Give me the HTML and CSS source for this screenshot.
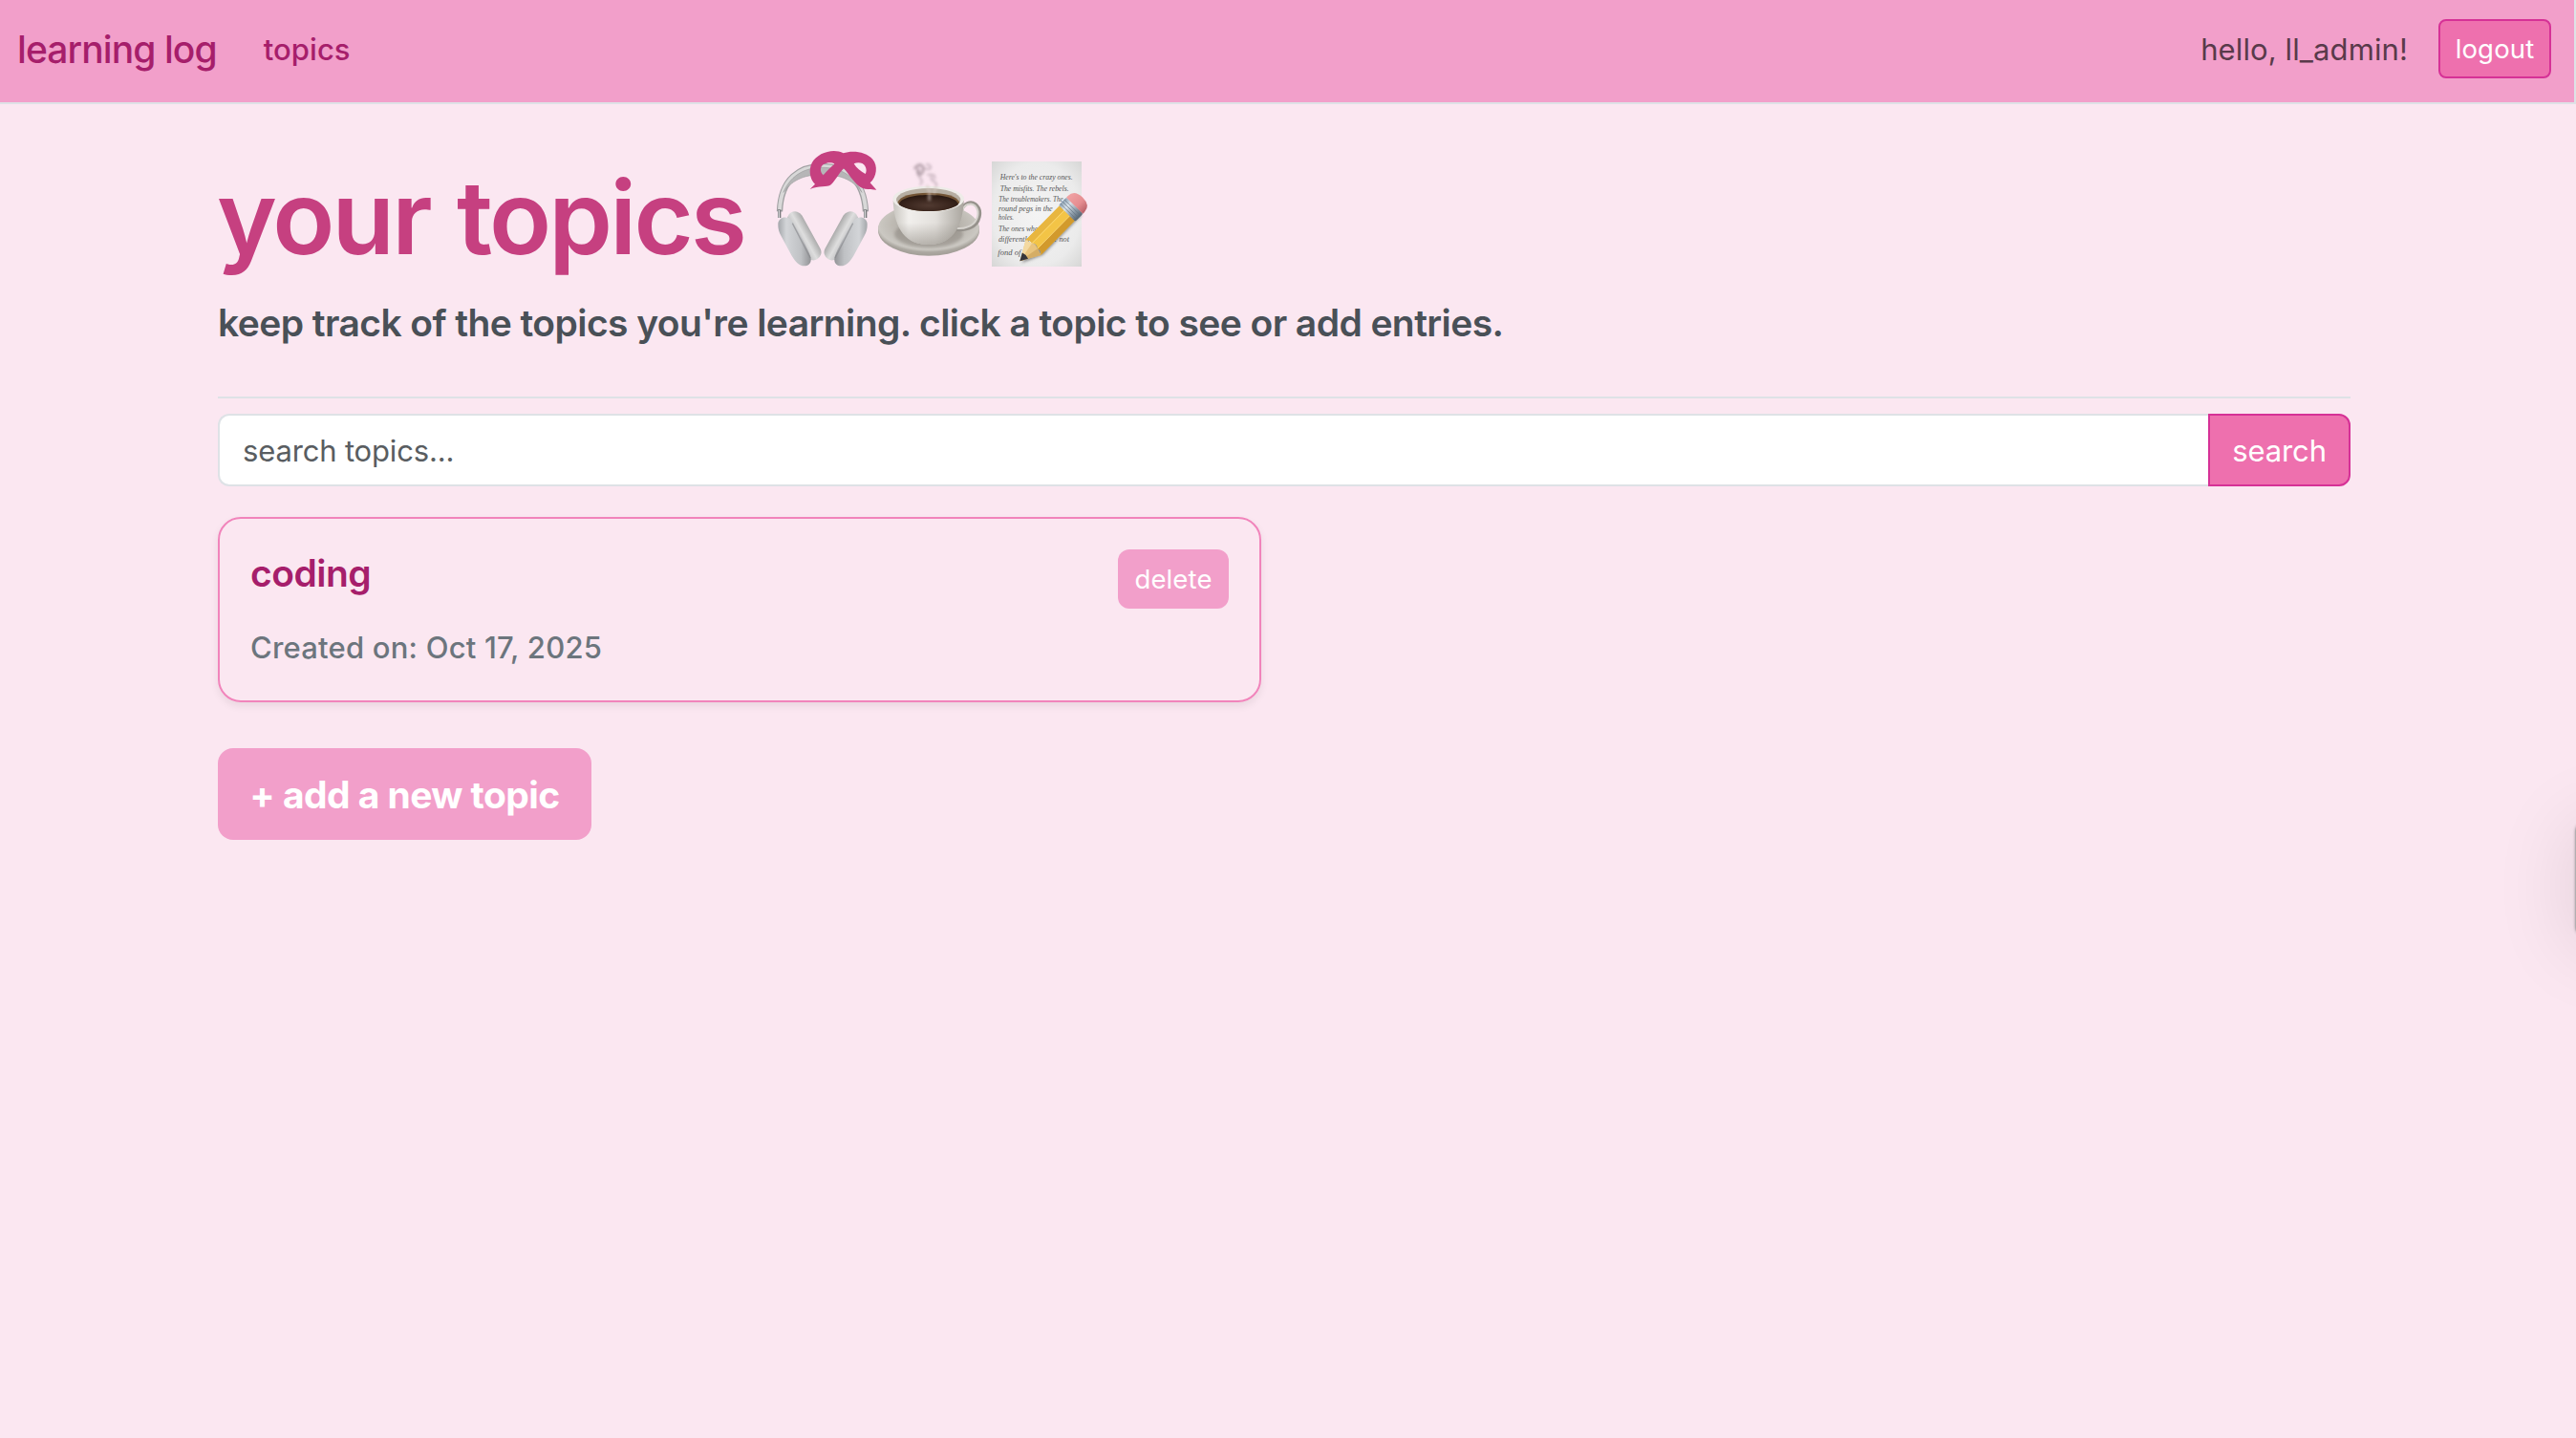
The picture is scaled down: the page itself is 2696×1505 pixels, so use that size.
FILE: index.html
```
<!DOCTYPE html>
<html lang="en">
<head>
<meta charset="utf-8">
<title>learning log</title>
<link rel="stylesheet" href="styles.css">
</head>
<body>
<nav class="navbar">
  <a class="brand">learning log</a>
  <a class="nav-link">topics</a>
  <span class="greeting">hello, ll_admin!</span>
  <button class="btn-logout">logout</button>
</nav>
<main class="container">
  <h1 class="title">
    <span class="title-text">your topics</span>
    <svg class="title-art" viewBox="0 0 1110 480" aria-hidden="true">
      <defs>
        <linearGradient id="cupL" x1="0" x2="1"><stop offset="0" stop-color="#a3a6aa"/><stop offset=".25" stop-color="#d3d5d8"/><stop offset=".7" stop-color="#bfc1c4"/><stop offset="1" stop-color="#929396"/></linearGradient>
        <linearGradient id="pad" x1="0" x2="1"><stop offset="0" stop-color="#bdbdbf"/><stop offset=".5" stop-color="#dedede"/><stop offset="1" stop-color="#acacac"/></linearGradient>
        <radialGradient id="saucer" cx=".5" cy=".42" r=".55"><stop offset="0" stop-color="#8f8a83"/><stop offset=".6" stop-color="#bbb7b0"/><stop offset=".9" stop-color="#cbc8c2"/><stop offset="1" stop-color="#aaa69f"/></radialGradient>
        <linearGradient id="mug" x1="0" x2="1"><stop offset="0" stop-color="#c9c6c0"/><stop offset=".22" stop-color="#f1efec"/><stop offset=".6" stop-color="#e3e0dc"/><stop offset="1" stop-color="#a9a59e"/></linearGradient>
        <linearGradient id="mugShade" x1="0" x2="0" y1="0" y2="1"><stop offset=".5" stop-color="#8d8880" stop-opacity="0"/><stop offset="1" stop-color="#8d8880" stop-opacity=".55"/></linearGradient>
        <radialGradient id="coffee" cx=".5" cy=".65" r=".6"><stop offset="0" stop-color="#513a31"/><stop offset=".7" stop-color="#37231b"/><stop offset="1" stop-color="#2a1912"/></radialGradient>
        <radialGradient id="paper" cx=".5" cy=".5" r=".75"><stop offset="0" stop-color="#f4f4f4"/><stop offset=".65" stop-color="#ebebeb"/><stop offset="1" stop-color="#d2d2d1"/></radialGradient>
        <linearGradient id="rubber" x1="0" x2="0" y1="0" y2="1"><stop offset="0" stop-color="#f0a2a3"/><stop offset=".6" stop-color="#e58c90"/><stop offset="1" stop-color="#b96068"/></linearGradient>
        <linearGradient id="metal" x1="0" x2="0" y1="0" y2="1"><stop offset="0" stop-color="#8ba0b3"/><stop offset=".3" stop-color="#d9e2ea"/><stop offset=".65" stop-color="#91a0ad"/><stop offset="1" stop-color="#566573"/></linearGradient>
        <filter id="soft" x="-30%" y="-30%" width="160%" height="160%"><feGaussianBlur stdDeviation="5"/></filter>
      </defs>

      <!-- headphones -->
      <g fill="none">
        <path d="M78 244C82 140 142 102 212 102S342 140 348 244" stroke="#a0a0a2" stroke-width="19"/>
        <path d="M78 240C82 140 142 102 212 102S342 140 348 240" stroke="#d8d8d8" stroke-width="12"/>
        <path d="M90 184C115 124 165 106 212 106S309 124 336 184C306 140 260 128 212 128S120 140 90 184Z" fill="#b6b6b7" stroke="#a0a0a2" stroke-width="2"/>
        <path d="M77 238V264M347 238V264" stroke="#77787b" stroke-width="10"/>
        <path d="M76 240V264M346 240V264" stroke="#d5d6d8" stroke-width="4"/>
      </g>
      <g id="earcup">
        <rect x="-24" y="-84" width="50" height="168" rx="25" transform="translate(154 321) rotate(-29)" fill="url(#pad)"/>
        <path d="M73 284C73 263 98 255 114 271C123 281 170 366 175 387C180 406 168 415 156 415C137 415 128 401 116 383L83 322C75 307 73 298 73 284Z" fill="url(#cupL)"/>
        <path d="M118 281L174 390" stroke="#88898d" stroke-width="4" opacity=".65"/>
      </g>
      <use href="#earcup" transform="translate(426 0) scale(-1 1)"/>

      <!-- bow -->
      <path fill="#c64080" fill-rule="evenodd" d="M173 174L189 158C172 142 168 112 180 90C196 60 247 43 278 61C307 51 350 57 370 80C387 101 383 134 362 154L382 176C355 175 335 174 320 158C303 141 290 120 279 109C265 123 251 149 239 160C228 169 200 163 173 174ZM215 130C204 121 204 103 216 96C228 89 244 90 250 95C238 104 227 116 215 130ZM347 126C332 119 319 107 311 94C324 88 340 91 346 101C351 110 351 119 347 126Z"/>

      <!-- coffee -->
      <ellipse cx="546" cy="303" rx="159" ry="80" fill="#a5a19a"/>
      <ellipse cx="546" cy="298" rx="159" ry="79" fill="url(#saucer)"/>
      <ellipse cx="546" cy="315" rx="108" ry="42" fill="#77716a" opacity=".38" filter="url(#soft)"/>
      <path d="M650 240C654 218 678 211 692 221C716 239 708 286 672 296C658 301 644 302 632 300" fill="none" stroke="#96928c" stroke-width="11"/>
      <path d="M653 239C657 222 678 215 690 225C709 243 702 281 669 292C657 297 646 298 634 297" fill="none" stroke="#d6d3ce" stroke-width="6"/>
      <path d="M434 210C437 277 458 348 545 348S653 277 656 210Z" fill="url(#mug)"/>
      <path d="M434 210C437 277 458 348 545 348S653 277 656 210Z" fill="url(#mugShade)"/>
      <ellipse cx="545" cy="205" rx="112" ry="41" fill="#eeece8"/>
      <ellipse cx="545" cy="207" rx="101" ry="36" fill="#b6aea2"/>
      <path d="M448 216C455 195 493 185 545 185S636 195 643 216C628 233 594 243 545 243S462 233 448 216Z" fill="#745637"/>
      <path d="M452 222C457 202 496 192 545 192S634 202 639 222C621 236 588 243 545 243S470 236 452 222Z" fill="url(#coffee)"/>
      <g fill="none" stroke="#98858f" stroke-linecap="round" filter="url(#soft)">
        <path d="M503 108C520 88 533 102 527 119C520 137 507 123 513 113" stroke-width="9" opacity=".65"/>
        <path d="M520 159C538 143 500 134 516 117M535 109C560 117 554 96 540 96M543 128C559 128 566 126 565 140M570 163C576 150 548 150 554 135" stroke-width="6" opacity=".5"/>
        <path d="M548 207V178C546 170 538 166 541 163M563 187L567 168" stroke="#d8cbc4" stroke-width="8" opacity=".65"/>
      </g>

      <!-- memo -->
      <rect x="744" y="87" width="282" height="330" fill="url(#paper)"/>
      <g class="memo-text">
        <text x="770" y="144" textLength="228" lengthAdjust="spacingAndGlyphs">Here's to the crazy ones.</text>
        <text x="770" y="180" textLength="216" lengthAdjust="spacingAndGlyphs">The misfits. The rebels.</text>
        <text x="766" y="214" textLength="202" lengthAdjust="spacingAndGlyphs">The troublemakers. The</text>
        <text x="765" y="244" textLength="170" lengthAdjust="spacingAndGlyphs">round pegs in the</text>
        <text x="765" y="271" textLength="48" lengthAdjust="spacingAndGlyphs">holes.</text>
        <text x="765" y="306" textLength="125" lengthAdjust="spacingAndGlyphs">The ones who</text>
        <text x="765" y="338" textLength="222" lengthAdjust="spacingAndGlyphs">differently. They're not</text>
        <text x="763" y="381" textLength="72" lengthAdjust="spacingAndGlyphs">fond of</text>
      </g>
      <path d="M838 406L905 380L1026 256L1010 232L870 350Z" fill="#333" opacity=".5" filter="url(#soft)"/>
      <g transform="translate(832 400) rotate(-45.5)">
        <path d="M0 0L60 -33L71 0L60 34Z" fill="#e9c47e"/>
        <path d="M0 0L60 -33L67 -12Z" fill="#f3d9a1"/>
        <path d="M0 0L67 12L60 34Z" fill="#d5ad66"/>
        <path d="M0 0L24 -13Q29 0 24 13Z" fill="#35353b"/>
        <path d="M60 -33H212V34H60Q74 24 67 12Q77 0 67 -12Q71 -25 60 -33Z" fill="#f3c446"/>
        <path d="M60 -33H212V-13H67Q71 -25 60 -33Z" fill="#e8b640"/>
        <path d="M67 12H212V34H60Q74 24 67 12Z" fill="#d29a2c"/>
        <path d="M69 -12H212M67 12H212" stroke="#ffe28b" stroke-width="2"/>
        <rect x="211" y="-36" width="34" height="73" rx="4" fill="url(#metal)"/>
        <path d="M218 -35V36M227 -35V36M236 -35V36" stroke="#61717f" stroke-width="2.5" opacity=".75"/>
        <path d="M245 -36H252Q281 -36 281 0T252 37H245Z" fill="url(#rubber)"/>
      </g>
    </svg>
  </h1>
  <p class="lead">keep track of the topics you're learning. click a topic to see or add entries.</p>
  <hr class="rule">
  <form class="search">
    <input class="search-input" type="text" placeholder="search topics...">
    <button class="search-btn" type="button">search</button>
  </form>
  <section class="card">
    <div class="card-head">
      <h2 class="card-title">coding</h2>
      <button class="btn-delete">delete</button>
    </div>
    <p class="card-date">Created on: Oct 17, 2025</p>
  </section>
  <a class="btn-add">+ add a new topic</a>
</main>
<div class="side-window"></div>
</body>
</html>
```
FILE: styles.css
```
* { box-sizing: border-box; }

body {
  margin: 0;
  min-height: 100vh;
  overflow: hidden;
  background: #fbe7f1;
  font-family: Inter, "Liberation Sans", sans-serif;
  font-size: 31px;
}

h1, h2, p { margin: 0; }
button, input { font-family: inherit; margin: 0; }

.navbar {
  display: flex;
  align-items: center;
  height: 109px;
  padding: 0 24px 5px 18px;
  background: #f29fca;
  border: solid #dee2e6;
  border-width: 0 2px 2px 0;
}
.brand {
  font-size: 39px;
  font-weight: 500;
  letter-spacing: -0.912px;
  color: #a61e6b;
}
.nav-link {
  margin-left: 49px;
  font-weight: 500;
  letter-spacing: 0.05px;
  color: #a61e6b;
}
.greeting {
  margin-left: auto;
  letter-spacing: 0.108px;
  color: #593a4a;
}
.btn-logout {
  width: 118px;
  height: 62px;
  margin-left: 32px;
  padding: 0;
  border: 2px solid #d63196;
  border-radius: 8px;
  background: #ee70ae;
  color: #fff;
  font-size: 27.5px;
  letter-spacing: 0.147px;
}

.container {
  width: 2232px;
  margin-left: 228px;
  padding-top: 51px;
}
.title {
  display: flex;
  align-items: flex-start;
  height: 134px;
  font-size: 107px;
  font-weight: 600;
  line-height: 134px;
  letter-spacing: -2.8px;
  word-spacing: 4px;
  color: #c64080;
}
.title-text {
  width: 563px;
  margin-left: -1px;
  white-space: nowrap;
}
.title-art {
  flex: none;
  width: 370px;
  height: 160px;
  margin-top: -20px;
}
.memo-text {
  font: italic 26px "Liberation Serif", serif;
  letter-spacing: 0;
  word-spacing: 0;
  fill: #555;
}
.lead {
  margin-top: 20px;
  font-size: 39px;
  font-weight: 600;
  line-height: 48px;
  letter-spacing: -0.58px;
  color: #495057;
}
.rule {
  height: 2px;
  margin: 53px 0 16px;
  border: 0;
  background: #dee2e6;
}
.search { display: flex; height: 76px; }
.search-input {
  flex: 1;
  padding: 1px 24px 0;
  border: 2px solid #dee2e6;
  border-right: 0;
  border-radius: 12px 0 0 12px;
  background: #fff;
  font-size: 31px;
  letter-spacing: -0.161px;
}
.search-input::placeholder { color: #595d61; opacity: 1; }
.search-btn {
  width: 149px;
  padding: 1px 0 0;
  border: 2px solid #d63196;
  border-radius: 0 12px 12px 0;
  background: #ee70ae;
  color: #fff;
  font-size: 31px;
  letter-spacing: -0.102px;
}

.card {
  width: 1092px;
  height: 194px;
  margin-top: 32px;
  padding: 32px;
  border: 2px solid #f184bb;
  border-radius: 24px;
  box-shadow: 0 4px 8px rgba(0, 0, 0, 0.075);
}
.card-head {
  display: flex;
  justify-content: space-between;
  align-items: flex-start;
}
.card-title {
  font-size: 39px;
  font-weight: 600;
  line-height: 49px;
  letter-spacing: -0.5px;
  color: #a61e6b;
}
.btn-delete {
  width: 116px;
  height: 62px;
  padding: 0;
  border: 0;
  border-radius: 12px;
  background: #f29fca;
  color: #fff;
  font-size: 27.5px;
  letter-spacing: 0.142px;
}
.card-date {
  margin-top: 17px;
  font-weight: 500;
  line-height: 48px;
  letter-spacing: 0.208px;
  color: #6c757d;
}
.btn-add {
  display: flex;
  justify-content: center;
  align-items: center;
  width: 391px;
  height: 96px;
  margin-top: 48px;
  border-radius: 16px;
  background: #f29fca;
  color: #fff;
  font-size: 39px;
  font-weight: 700;
  letter-spacing: -0.561px;
}

/* floating panel peeking in from the right edge */
.side-window {
  position: absolute;
  top: 860px;
  left: 2695px;
  width: 120px;
  height: 120px;
  border-radius: 10px;
  background: #b3aeb1;
  box-shadow: 0 0 3px rgba(0, 0, 0, 0.3), 0 8px 80px 10px rgba(0, 0, 0, 0.085);
}
```
